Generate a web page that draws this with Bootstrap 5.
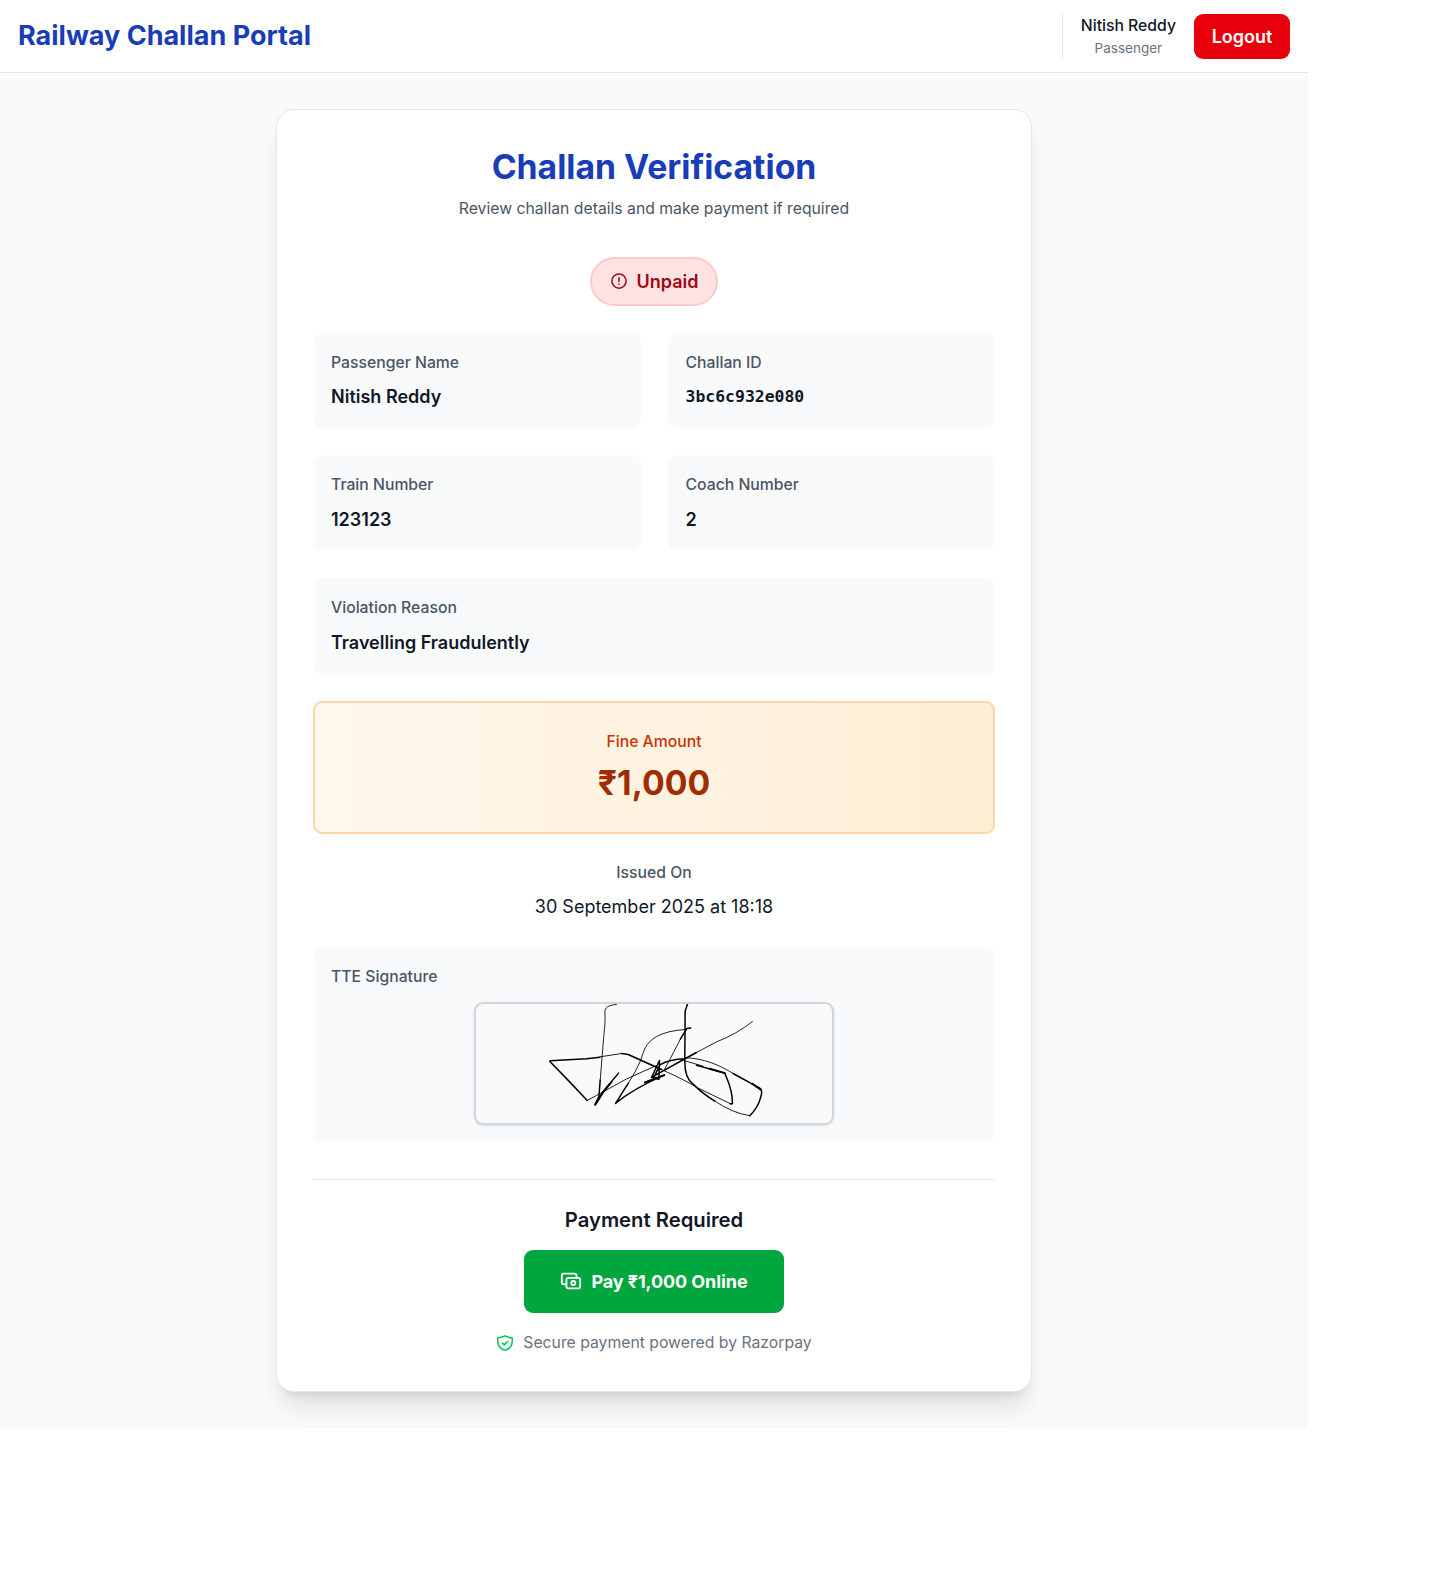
<!DOCTYPE html>
<html lang="en">
<head>
<meta charset="utf-8">
<meta name="viewport" content="width=device-width, initial-scale=1">
<title>Railway Challan Portal</title>
<link href="https://cdn.jsdelivr.net/npm/bootstrap@5.3.0/dist/css/bootstrap.min.css" rel="stylesheet">
<style>
body{font-family:Inter,"Liberation Sans",sans-serif;font-size:18px;line-height:27px;color:#101828;background:#fff}
.portal{width:1308px;height:1428px;overflow:hidden;background:#f9fafb}
.topbar{height:73px;padding:0 18px;border-bottom:1px solid #e5e7eb}
.brand-name{font-size:27px;line-height:36px;font-weight:700;color:#193cb8;padding-bottom:1px}
.user-box{height:45px;border-left:1px solid #e5e7eb;padding:1px 18px 0}
.user-name{font-size:15.75px;line-height:22.5px;font-weight:500}
.user-role{font-size:13.5px;line-height:18px;color:#6a7282;margin-top:2px}
.btn-logout{--bs-btn-color:#fff;--bs-btn-bg:#e7000b;--bs-btn-hover-color:#fff;--bs-btn-hover-bg:#c10007;--bs-btn-border-width:0;width:96px;height:45px;padding:0;font-size:18px;font-weight:600;border-radius:9px}
.challan{width:756px;height:1283px;margin-top:36px;padding:37px 36px 36px;border:1px solid #e5e7eb;border-radius:18px;box-shadow:0 20px 25px -5px rgba(0,0,0,.1),0 8px 10px -6px rgba(0,0,0,.1)}
.challan h1{font-size:33.75px;line-height:40.5px;font-weight:700;color:#193cb8;margin-bottom:8px}
.subtitle{font-size:15.75px;line-height:25px;color:#4a5565}
.status-pill{height:49px;margin:36px 0 27px;padding:0 18px;border:2px solid #ffc9c9;border-radius:25px;background:#ffe2e2;color:#9f0712;font-weight:600;gap:9px}
.facts{row-gap:27px;column-gap:27px;display:grid;grid-template-columns:1fr 1fr;grid-template-rows:95px 96px 96px}
.fact{background:#f9fafb;border-radius:9px;padding:19px 18px 18px}
.fact-label{font-size:15.75px;line-height:22.5px;font-weight:500;color:#4a5565}
.fact-value{font-weight:600;margin-top:9.5px}
.first-row .fact-value{margin-top:8.5px}
.wide{grid-column:span 2}
.fact-value.mono-id{font-family:"DejaVu Sans Mono",monospace;font-size:16.45px}
.fine-box{height:133px;margin-top:27px;padding-top:28px;border:2px solid #ffd6a8;border-radius:9px;background:linear-gradient(to right,#fff7ed,#ffedd4)}
.fine-box .fact-label{color:#ca3500}
.fine-sum{font-size:33.75px;line-height:40.5px;font-weight:700;color:#9f2d00;margin-top:10px}
.issued{height:113px;padding-top:28px}
.issued-date{margin-top:9px}
.sign-panel{height:196px}
.sign-frame{width:360px;height:123px;margin:14px auto 0;border:2px solid #d1d5dc;border-radius:9px;box-shadow:0 1px 3px rgba(0,0,0,.1),0 1px 2px -1px rgba(0,0,0,.1)}
.sign-frame svg{display:block;width:100%;height:100%}
.payment{margin-top:36px;padding-top:26px;border-top:1px solid #e5e7eb}
.payment h2{font-size:20.25px;line-height:27px;font-weight:600;margin-bottom:17px}
.btn-pay{--bs-btn-color:#fff;--bs-btn-bg:#00a63e;--bs-btn-hover-color:#fff;--bs-btn-hover-bg:#008236;--bs-btn-border-width:0;width:260px;height:63px;border-radius:9px;font-size:18px;font-weight:700;letter-spacing:-.09px;gap:9px}
.secure{margin-top:18px;font-size:15.75px;line-height:24px;color:#6a7282;gap:9px}
</style>
<script defer src="https://cdn.jsdelivr.net/npm/bootstrap@5.3.0/dist/js/bootstrap.bundle.min.js"></script>
</head>
<body>
<div class="portal">
  <header class="topbar bg-white d-flex justify-content-between align-items-center">
    <div class="brand-name">Railway Challan Portal</div>
    <div class="d-flex align-items-center">
      <div class="user-box text-center">
        <div class="user-name">Nitish Reddy</div>
        <div class="user-role">Passenger</div>
      </div>
      <button class="btn btn-logout" type="button">Logout</button>
    </div>
  </header>
  <main>
    <section class="challan bg-white mx-auto">
      <div class="text-center">
        <h1>Challan Verification</h1>
        <div class="subtitle">Review challan details and make payment if required</div>
        <div class="d-flex justify-content-center">
          <div class="status-pill d-flex align-items-center">
            <svg width="18" height="18" viewBox="0 0 24 24" fill="none" stroke="currentColor" stroke-width="2" stroke-linecap="round" stroke-linejoin="round"><circle cx="12" cy="12" r="9.5"/><path d="M12 7.5v5M12 16v.2"/></svg>
            <span>Unpaid</span>
          </div>
        </div>
      </div>
      <div class="facts">
        <div class="fact first-row"><div class="fact-label">Passenger Name</div><div class="fact-value">Nitish Reddy</div></div>
        <div class="fact first-row"><div class="fact-label">Challan ID</div><div class="fact-value mono-id">3bc6c932e080</div></div>
        <div class="fact"><div class="fact-label">Train Number</div><div class="fact-value">123123</div></div>
        <div class="fact"><div class="fact-label">Coach Number</div><div class="fact-value">2</div></div>
        <div class="fact wide"><div class="fact-label">Violation Reason</div><div class="fact-value">Travelling Fraudulently</div></div>
      </div>
      <div class="fine-box text-center">
        <div class="fact-label">Fine Amount</div>
        <div class="fine-sum">₹1,000</div>
      </div>
      <div class="issued text-center">
        <div class="fact-label">Issued On</div>
        <div class="issued-date">30 September 2025 at 18:18</div>
      </div>
      <div class="fact sign-panel">
        <div class="fact-label">TTE Signature</div>
        <div class="sign-frame">
          <svg viewBox="18 41 1069 358" preserveAspectRatio="none" fill="none" stroke="#000" stroke-linecap="round" stroke-linejoin="round">
            <g stroke-width="2.6">
              <path d="M440 42C415 45 405 51 405 65C407 100 403 120 401 145L391 270"/>
              <path d="M352 331L380 316Q470 262 560 226"/>
              <path d="M455 190L390 200"/>
              <path d="M475 280Q495 250 512 212C523 180 525 160 560 139Q592 121 645 118"/>
              <path d="M848 94Q800 132 740 155L680 187"/>
              <path d="M575 238Q650 272 685 294L786 343"/>
              <path d="M645 203C700 203 750 225 790 250"/>
              <path d="M735 333Q790 370 840 377"/>
              <path d="M632 146L612 185L583 240"/>
              <path d="M645 212L700 228"/>
            </g>
            <g stroke-width="4.5">
              <path d="M240 212L350 206L390 201M455 190L475 193L575 238"/>
              <path d="M240 214L300 276L352 331"/>
              <path d="M391 270L387 320L376 344L400 304L446 249"/>
              <path d="M475 280L437 340Q490 296 583 255"/>
              <path d="M663 113L651 115L632 146"/>
              <path d="M653 42L646 62L645 215C645 250 655 272 670 282Q700 312 735 333"/>
              <path d="M680 187L636 211L545 262L569 211L567 267L551 264L570 224Q600 207 645 206"/>
              <path d="M680 225L765 249C773 270 789 297 788 340L781 341"/>
              <path d="M790 250L870 294Q880 300 873 321Q865 353 840 377"/>
            </g>
            <path stroke-width="6" d="M387 322L376 344L400 306L425 275M547 261L567 266M525 277L583 255M720 236L765 249M848 281L873 299"/>
          </svg>
        </div>
      </div>
      <div class="payment d-flex flex-column align-items-center">
        <h2>Payment Required</h2>
        <button class="btn btn-pay d-flex align-items-center justify-content-center" type="button">
          <svg width="22" height="22" viewBox="0 0 24 24" fill="none" stroke="currentColor" stroke-width="2" stroke-linecap="round" stroke-linejoin="round"><rect x="7" y="8.500" width="15" height="11.500" rx="2"/><circle cx="14.5" cy="14.200" r="2.200"/><path d="M18 8.500V6a2 2 0 0 0-2-2H4a2 2 0 0 0-2 2v7.500a2 2 0 0 0 2 2h3"/></svg>
          <span>Pay ₹1,000 Online</span>
        </button>
        <div class="secure d-flex align-items-center">
          <svg width="18" height="18" viewBox="0 0 24 24" fill="none" stroke="#00c950" stroke-width="2" stroke-linecap="round" stroke-linejoin="round"><path d="M12 2.500Q7.500 5 2.500 5C1.500 13 4 19.500 12 21.500C20 19.500 22.500 13 21.500 5Q16.500 5 12 2.500Z"/><path d="M8.500 12l2.500 2.500 4.500-4.500"/></svg>
          <span>Secure payment powered by Razorpay</span>
        </div>
      </div>
    </section>
  </main>
</div>
</body>
</html>
